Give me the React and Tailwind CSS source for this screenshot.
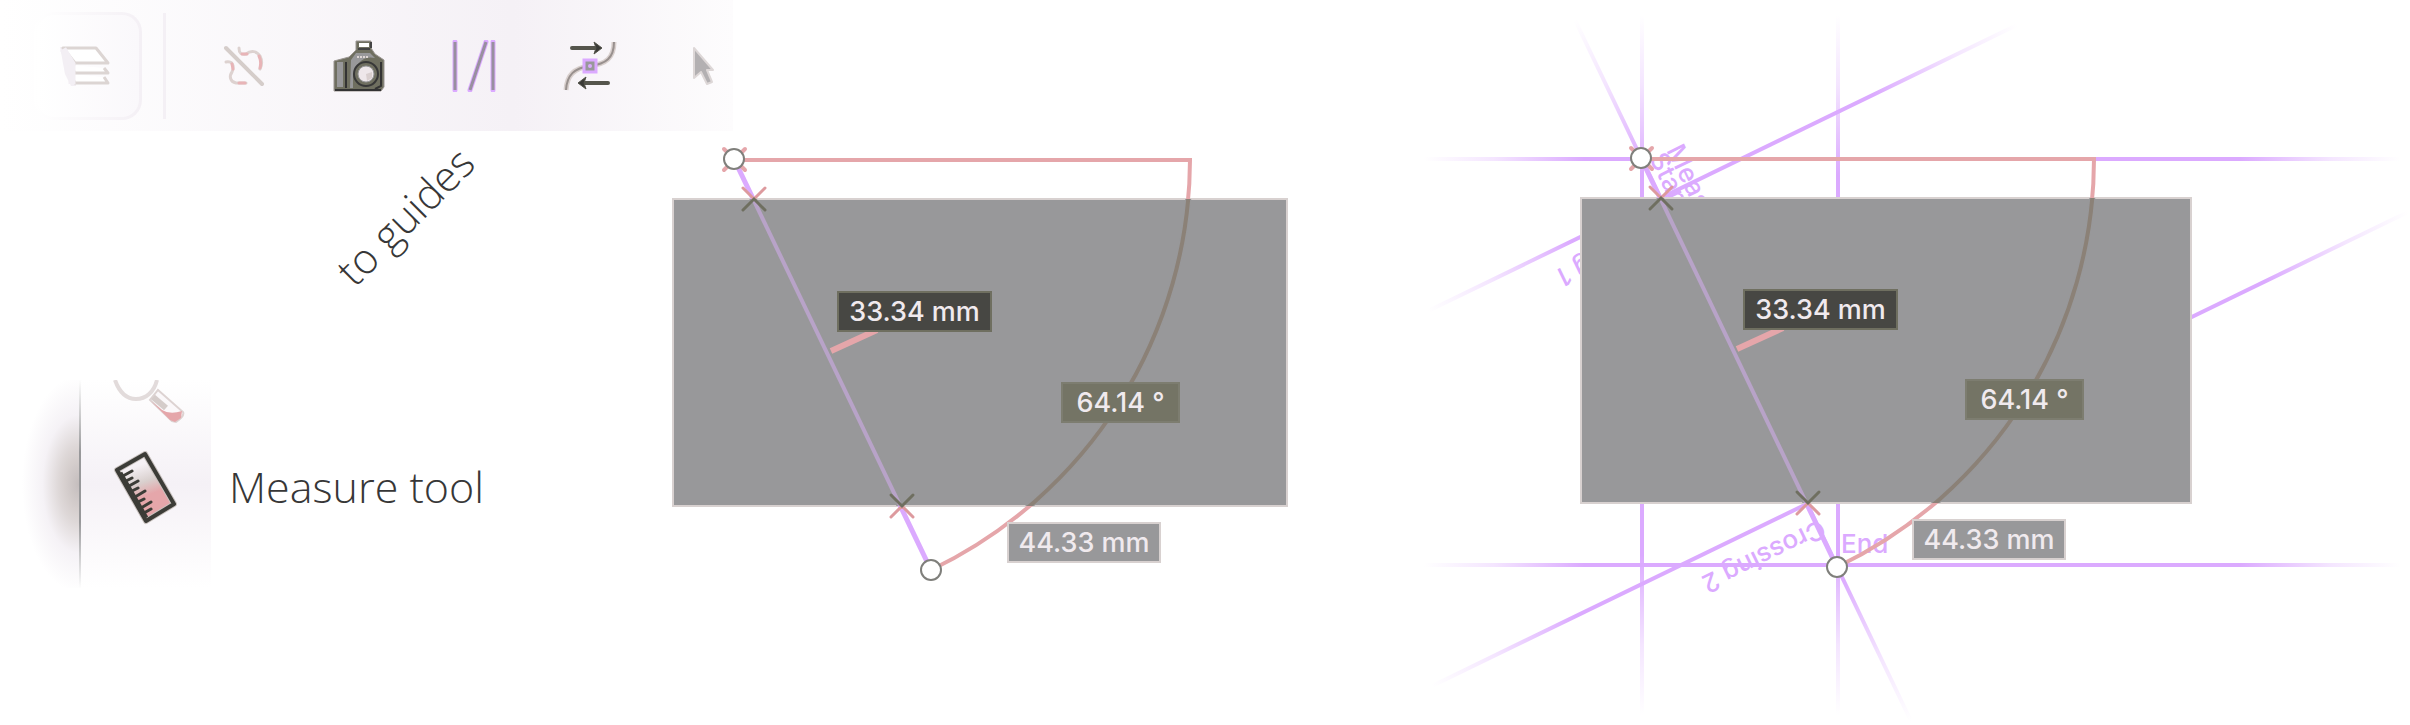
const GREY = "#98989a";
const PINK = "#e5a6aa";
const PURPLE = "#dbaaff";
const OLIVE = "#6f6f60";

function LayersIcon() {
  return (
    <svg width="52" height="52" viewBox="0 0 52 52" aria-hidden="true" className="overflow-visible">
      <path d="M-2 7 L6 8 L14 22 V46 H9 L3 34 Z" fill="#f3eff4" />
      <g strokeLinejoin="round" strokeWidth="3">
        <path d="M8 34 L13 43 H46 L42 37" fill="#fff" stroke="#dcd5d3" />
        <path d="M8 25 L13 33 H46 L42 28" fill="#fff" stroke="#dcd5d3" />
        <path d="M1 8 H34 L46 23 H13 Z" fill="#fff" stroke="#dcd5d3" />
      </g>
      <path d="M1 9 L10 24 V44" fill="none" stroke="#f3eff4" strokeWidth="7" />
    </svg>
  );
}

function UnlinkIcon() {
  return (
    <svg width="52" height="52" viewBox="0 0 52 52" aria-hidden="true">
      <g fill="none" strokeLinecap="round" strokeWidth="3">
        <path d="M21 8 C21 13 23 15 28 14 C33 10 39 11 42 16 C44 20 44 25 42 29" stroke="#ddd2d0" />
        <path d="M24 14 L29 14 M41 16 C43 20 43 24 42 28" stroke="#e8b4b7" />
        <path d="M8 22 C14 21 17 25 14 32 C11 36 12 42 18 43 H28" stroke="#ddd2d0" />
        <path d="M14 24 L15 29 M21 43 H27" stroke="#e8b4b7" />
        <path d="M8 8 L44 44" stroke="#d5cdca" strokeWidth="4" />
      </g>
    </svg>
  );
}

function CameraIcon() {
  return (
    <svg width="52" height="52" viewBox="0 0 52 52" aria-hidden="true">
      <path d="M23 1 H38 V8 L42 14 L51 20 V47 L48 51 H1 V21 L16 17 L23 10 Z" fill={OLIVE} stroke="#9b9692" />
      <path d="M26 3 H36 V7 H26 Z" fill="#fff" />
      <path d="M4 22 H10 V47 H4 Z M18 20 L23 13 H37 L42 18 C30 15 22 24 20 36 V48 H17 Z" fill={GREY} />
      <path d="M13 22 V48 M48 22 V46 L42 49 M2 50 H48" fill="none" stroke="#333" strokeWidth="2" />
      <path d="M38 2 V8 M25 9 H37" stroke="#444" strokeWidth="2" />
      <circle cx="33" cy="34" r="12" fill={OLIVE} stroke="#383838" strokeWidth="2" />
      <circle cx="33" cy="34" r="8" fill="#eee7ea" stroke={GREY} />
      <path d="M33 34 L39 32 V38 L34 41 Z" fill="#d9cfcf" />
      <path d="M24 17 H36" stroke="#ddd5d3" strokeWidth="2" strokeDasharray="2 1" />
    </svg>
  );
}

function GuidesIcon() {
  const d = "M7 2 V50 M38 2 L22 50 M45 2 V50";
  return (
    <svg width="52" height="52" viewBox="0 0 52 52" aria-hidden="true">
      <path d={d} stroke={PURPLE} strokeWidth="5" strokeLinecap="round" />
      <path d={d} stroke="#98909f" strokeWidth="3" />
    </svg>
  );
}

function SwapIcon() {
  return (
    <svg width="52" height="52" viewBox="0 0 52 52" aria-hidden="true" className="overflow-visible">
      <path d="M51 2 C51 18 43 24 27 26 C11 28 4 35 3 50" fill="none" stroke="#d9d0ce" strokeWidth="5" />
      <path d="M51 2 C51 18 43 24 27 26 C11 28 4 35 3 50" fill="none" stroke="#98908e" strokeWidth="2" />
      <path d="M21 20 H33 V32 H21 Z" fill={GREY} stroke={PURPLE} strokeWidth="3" />
      <circle cx="27" cy="26" r="2" fill={PURPLE} />
      <path d="M9 8 H34 M45 43 H20" stroke="#55554c" strokeWidth="4" strokeLinecap="round" />
      <path d="M31 2 L39 8 L31 14 L33 8 Z M23 37 L15 43 L23 49 L21 43 Z" fill="#3a3a36" stroke="#55554c" />
    </svg>
  );
}

function CursorIcon() {
  return (
    <svg width="52" height="52" viewBox="0 0 52 52" aria-hidden="true">
      <path
        d="M15 8 V38 L22 32 L28 44 L33 42 L28 30 H34 Z"
        fill="#b3b0b2"
        stroke="#ddd7d7"
        strokeWidth="2"
        strokeLinejoin="round"
      />
    </svg>
  );
}

function MagnifierIcon() {
  return (
    <svg width="80" height="48" viewBox="0 0 80 48" aria-hidden="true">
      <path d="M9 0 C14 14 22 19 30 19 C40 19 48 12 51 0" fill="none" stroke="#e2dbdb" strokeWidth="4" />
      <path d="M52 10 L77 32 Q79 36 70 42 L66 41 L44 20 Z" fill="#fbf8fa" stroke="#ddd3d2" strokeWidth="2" />
      <path d="M45 21 L56 30 Q64 35 76 31 L75 38 L69 42 L64 40 Z" fill={PINK} />
      <path d="M47 17 L60 28" stroke="#d5ccca" strokeWidth="6" />
    </svg>
  );
}

function RulerIcon() {
  return (
    <svg width="64" height="74" viewBox="0 0 64 74" aria-hidden="true">
      <defs>
        <linearGradient id="ruler" x1="0.4" y1="0" x2="0.7" y2="1">
          <stop offset="0.15" stopColor="#f6f1f5" />
          <stop offset="0.4" stopColor="#d9d0ce" />
          <stop offset="0.6" stopColor={PINK} />
        </linearGradient>
      </defs>
      <path d="M32 3 L4 19 L33 70 L61 53 Z" fill="url(#ruler)" stroke="#c9c2bf" strokeWidth="6" strokeLinejoin="round" />
      <path d="M32 3 L4 19 L33 70 L61 53 Z" fill="none" stroke="#3c3c37" strokeWidth="4" strokeLinejoin="round" />
      <path d="M7 22 L33 67" stroke="#3c3c37" strokeWidth="5" />
      <path
        d="M10 25 L19 20 M13 30 L19 27 M16 35 L25 30 M19 40 L25 37 M22 46 L32 40 M25 51 L31 48 M28 57 L38 51 M31 62 L38 58"
        stroke="#3c3c37"
        strokeWidth="3"
        strokeLinecap="round"
      />
    </svg>
  );
}

const TOOLS = [
  ["Unlink", UnlinkIcon],
  ["Snapshot", CameraIcon],
  ["Guides", GuidesIcon],
  ["Reverse measure", SwapIcon],
];

function Toolbar() {
  return (
    <header className="flex h-[131px] w-[733px] items-center bg-linear-to-r from-white via-[#f5f1f6] via-70% to-[#fdfcfd] pl-[34px]">
      <button
        type="button"
        aria-label="All layers"
        className="flex h-[108px] w-[108px] items-center justify-center rounded-[20px] bg-linear-to-r from-white to-[#f4f0f5] p-[3px]"
      >
        <span className="flex h-full w-full items-center justify-center rounded-[17px] bg-linear-to-r from-white to-[#faf8fb]">
          <LayersIcon />
        </span>
      </button>
      <div className="mr-[20px] ml-[21px] h-[106px] w-[3px] bg-[#f4f0f5]" />
      {TOOLS.map(([name, Icon]) => (
        <button key={name} type="button" aria-label={name} className="flex h-[108px] w-[115px] items-center justify-center">
          <Icon />
        </button>
      ))}
      <button type="button" aria-label="Select" className="flex h-[108px] items-center pl-[33px]">
        <CursorIcon />
      </button>
    </header>
  );
}

function Palette() {
  return (
    <div className="flex h-[208px] items-center">
      <div className="ml-[22px] h-full w-[57px] bg-[radial-gradient(ellipse_100%_52%_at_100%_50%,#c4bdbd_0%,#d6cfce_24%,#ded8d8_36%,#f5f2f6_64%,#ffffff_100%)]" />
      <div className="flex h-full w-[132px] flex-col items-center border-l-2 border-[#d5cfcf] bg-linear-to-b from-white via-[#f5f1f6] to-white [border-image:linear-gradient(#fff,#98989a_35%,#98989a_68%,#fff)_1]">
        <button type="button" aria-label="Zoom tool" className="flex h-[70px]">
          <MagnifierIcon />
        </button>
        <button type="button" id="measure" className="flex h-[76px] w-full items-center pl-[32px]" aria-label="Measure tool">
          <RulerIcon />
        </button>
      </div>
      <label htmlFor="measure" className="ml-[18px] pt-[6px] font-['Open_Sans',sans-serif] text-[43px] leading-[60px] font-[350] whitespace-nowrap text-[#373737]">
        Measure tool
      </label>
    </div>
  );
}

function Badge({ x, y, w, fill, edge, children }) {
  return (
    <g>
      <rect x={x} y={y} width={w} height="39" fill={fill} stroke={edge} strokeWidth="2" />
      <text
        x={x + w / 2}
        y={y + 29}
        textAnchor="middle"
        fill="#f0eaee"
        className="font-[Inter,sans-serif] text-[27px] font-medium"
      >
        {children}
      </text>
    </g>
  );
}

function Cross({ x, y, flip }) {
  const s = flip ? -1 : 1;
  return (
    <g strokeWidth="3" strokeLinecap="round">
      <path d={`M${x - 11} ${y - 11 * s} L${x} ${y} L${x + 11} ${y - 11 * s}`} fill="none" stroke="#dd9a9e" />
      <path d={`M${x - 11} ${y + 11 * s} L${x} ${y} L${x + 11} ${y + 11 * s}`} fill="none" stroke={OLIVE} />
    </g>
  );
}

function Knob({ x, y, crossed }) {
  return (
    <g>
      {crossed && (
        <path
          d={`M${x - 10} ${y - 10} L${x + 11} ${y + 11} M${x + 11} ${y - 10} L${x - 10} ${y + 11}`}
          stroke={PINK}
          strokeWidth="4"
          strokeLinecap="round"
        />
      )}
      <circle cx={x} cy={y} r="10" fill="#fff" stroke="#7f7f7b" strokeWidth="2" />
    </g>
  );
}

function Measurement({ id, start, end, line, radius, box, c1, c2, tick, badges }) {
  const arc = `M${start[0]} ${line} H${start[0] + radius} A${radius} ${radius} 0 0 1 ${end[0]} ${end[1]}`;
  return (
    <g fill="none">
      <clipPath id={id}>
        <rect x={box[0]} y={box[1]} width={box[2]} height={box[3]} />
      </clipPath>
      <rect x={box[0]} y={box[1]} width={box[2]} height={box[3]} fill={GREY} stroke="#d8d1d0" strokeWidth="2" />
      <path d={`M${start} L${end}`} stroke={PURPLE} strokeWidth="5" />
      <path d={arc} stroke={PINK} strokeWidth="4" />
      <g clipPath={`url(#${id})`}>
        <path d={`M${start} L${end}`} stroke={GREY} strokeWidth="7" />
        <path d={`M${start} L${end}`} stroke="#b8a3c8" strokeWidth="4" />
        <path d={arc} stroke={GREY} strokeWidth="6" />
        <path d={arc} stroke="#8b8177" strokeWidth="4" />
      </g>
      <path d={`M${tick} l46 -21`} stroke={PINK} strokeWidth="6" />
      <Cross x={c1[0]} y={c1[1]} />
      <Cross x={c2[0]} y={c2[1]} flip />
      <Knob x={start[0]} y={start[1]} crossed />
      <Knob x={end[0]} y={end[1]} />
      <Badge x={badges[0][0]} y={badges[0][1]} w={153} fill="#474743" edge={OLIVE}>33.34 mm</Badge>
      <Badge x={badges[1][0]} y={badges[1][1]} w={117} fill="#747465" edge="#7d7d70">64.14 °</Badge>
      <Badge x={badges[2][0]} y={badges[2][1]} w={152} fill={GREY} edge="#d8d1d0">44.33 mm</Badge>
    </g>
  );
}

function MeasureView() {
  return (
    <svg viewBox="650 131 750 594" className="block h-auto w-full" role="img" aria-label="Measured rectangle">
      <Measurement
        id="box-a"
        start={[734, 159]}
        end={[931, 570]}
        line={160}
        radius={456}
        box={[673, 199, 614, 307]}
        c1={[754, 199]}
        c2={[902, 506]}
        tick={[831, 351]}
        badges={[[838, 292], [1062, 383], [1008, 523]]}
      />
    </svg>
  );
}

const GUIDES = [
  [1424, 159, 2400, 159],
  [1424, 565, 2400, 565],
  [1642, 15, 1642, 715],
  [1838, 15, 1838, 715],
  [1575, 20, 1911, 721],
  [1428, 311, 2017, 25],
  [1432, 686, 2408, 212],
];

function GuidesView() {
  return (
    <svg viewBox="1400 0 1010 725" className="block h-auto w-full" role="img" aria-label="Measurement converted to guides">
      <defs>
        {GUIDES.map(([x1, y1, x2, y2], i) => {
          const length = Math.hypot(x2 - x1, y2 - y1);
          return (
            <linearGradient key={i} id={`guide-${i}`} gradientUnits="userSpaceOnUse" x1={x1} y1={y1} x2={x2} y2={y2}>
              <stop offset="0" stopColor={PURPLE} stopOpacity="0" />
              <stop offset={70 / length} stopColor={PURPLE} stopOpacity="0.3" />
              <stop offset={160 / length} stopColor={PURPLE} />
              <stop offset={1 - 160 / length} stopColor={PURPLE} />
              <stop offset={1 - 70 / length} stopColor={PURPLE} stopOpacity="0.3" />
              <stop offset="1" stopColor={PURPLE} stopOpacity="0" />
            </linearGradient>
          );
        })}
      </defs>
      {GUIDES.map(([x1, y1, x2, y2], i) => (
        <path key={i} d={`M${x1} ${y1} L${x2} ${y2}`} stroke={`url(#guide-${i})`} strokeWidth="4" />
      ))}
      <g fill={PURPLE} className="font-[Inter,sans-serif] text-[26px] font-medium">
        <text x="1841" y="553">End</text>
        <text transform="translate(1666 150) rotate(64)">Measure</text>
        <text transform="translate(1649 158) rotate(64)">Start</text>
        <text transform="translate(1671 214) rotate(154)">Crossing 1</text>
        <text transform="translate(1820 519) rotate(154)">Crossing 2</text>
      </g>
      <Measurement
        id="box-b"
        start={[1641, 158]}
        end={[1837, 567]}
        line={159}
        radius={453}
        box={[1581, 198, 610, 305]}
        c1={[1661, 198]}
        c2={[1808, 503]}
        tick={[1737, 349]}
        badges={[[1744, 290], [1966, 380], [1913, 520]]}
      />
    </svg>
  );
}

export default function App() {
  return (
    <main className="grid grid-cols-[1400fr_1010fr] overflow-hidden bg-white">
      <section className="min-w-0">
        <Toolbar />
        <div className="grid grid-cols-[650fr_750fr]">
          <div className="min-w-0">
            <div className="mb-[79px] ml-[305px] flex h-[170px] w-[200px] items-center justify-center">
              <p className="-rotate-45 font-['Open_Sans',sans-serif] text-[42px] leading-[56px] font-[350] whitespace-nowrap text-[#373737]">
                to guides
              </p>
            </div>
            <Palette />
          </div>
          <MeasureView />
        </div>
      </section>
      <section className="min-w-0">
        <GuidesView />
      </section>
    </main>
  );
}
